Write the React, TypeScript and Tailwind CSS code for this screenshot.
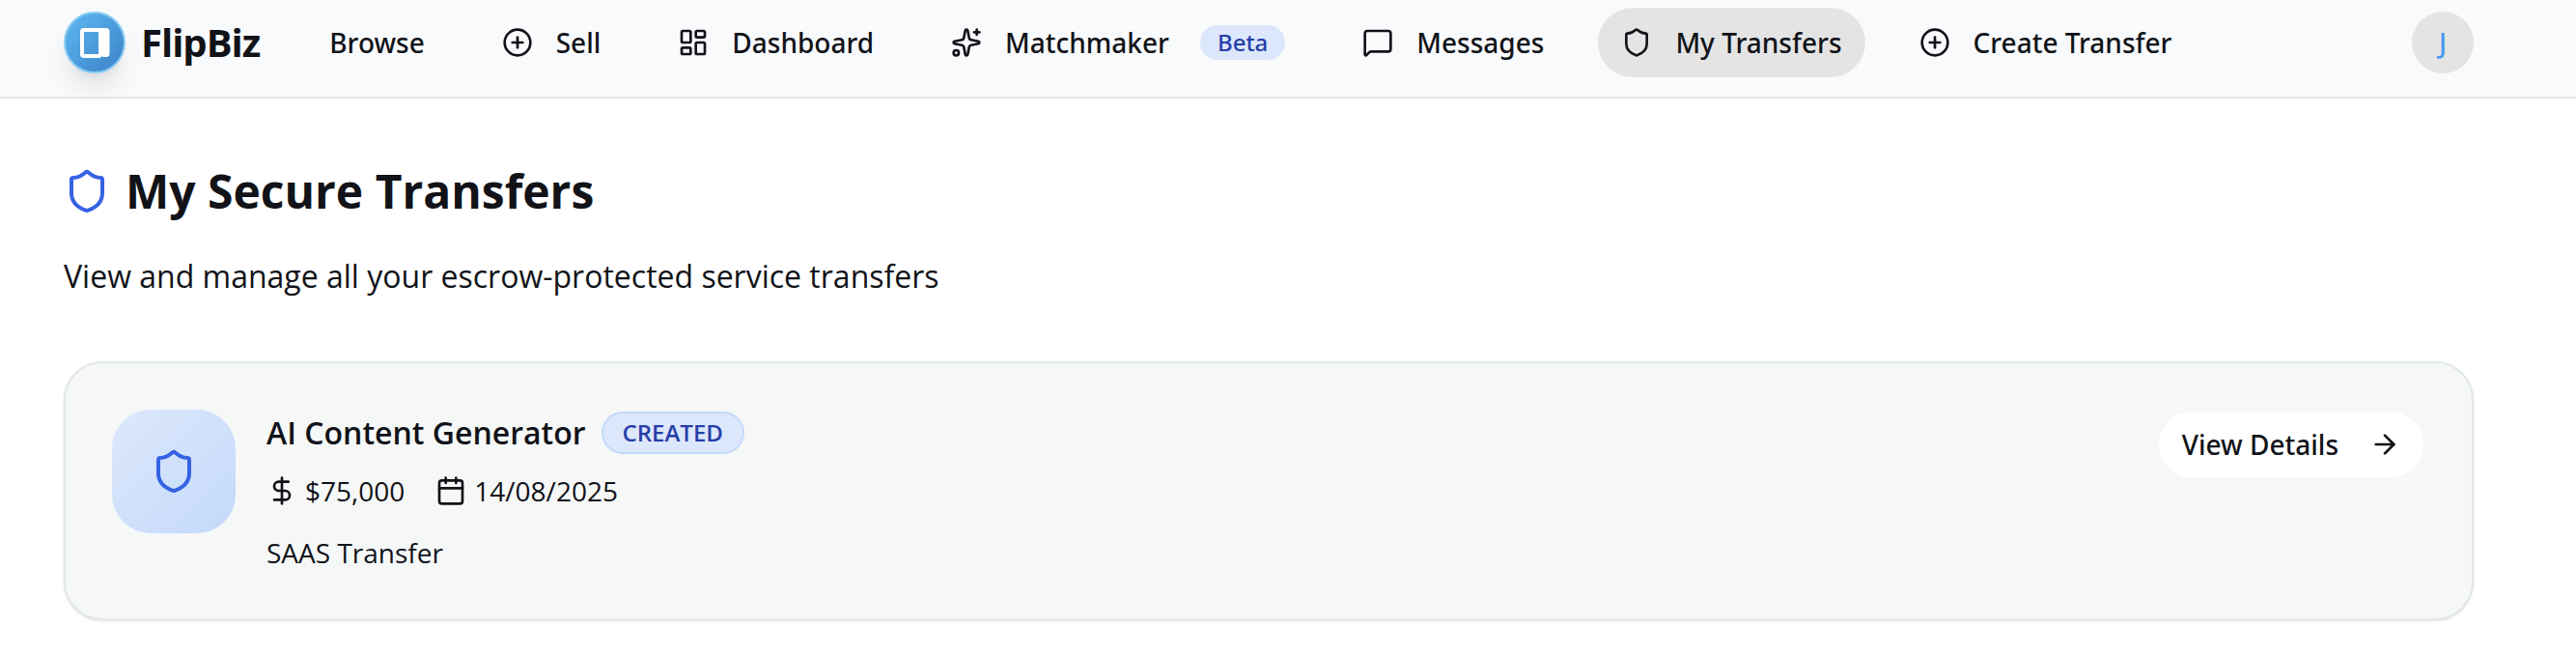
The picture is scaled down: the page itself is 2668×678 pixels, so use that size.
import {
  ArrowRight,
  Calendar,
  CirclePlus,
  DollarSign,
  LayoutDashboard,
  MessageSquare,
  Shield,
  Sparkles,
} from "lucide-react";

const navItems = [
  { href: "#browse", label: "Browse" },
  { href: "#sell", label: "Sell", icon: CirclePlus },
  { href: "#dashboard", label: "Dashboard", icon: LayoutDashboard },
  { href: "#matchmaker", label: "Matchmaker", icon: Sparkles, badge: "Beta" },
  { href: "#messages", label: "Messages", icon: MessageSquare },
  { href: "#transfers", label: "My Transfers", icon: Shield, active: true },
  { href: "#create", label: "Create Transfer", icon: CirclePlus },
];

const transfers = [
  {
    id: 1,
    title: "AI Content Generator",
    status: "CREATED",
    price: "$75,000",
    date: "14/08/2025",
    type: "SAAS Transfer",
  },
];

function Logo() {
  return (
    <span className="flex h-16 w-16 items-center justify-center rounded-full border-2 border-[#8accf5] bg-linear-to-br from-[#5fb8f0] to-[#3b82c8] shadow-[0_20px_30px_-6px_rgba(0,0,0,0.1),0_8px_12px_-8px_rgba(0,0,0,0.1)]">
      <svg viewBox="0 0 32 32" className="h-8 w-8" fill="none">
        <rect x="3" y="3" width="19" height="27" rx="2" stroke="white" strokeWidth="4" />
        <path d="M20 1h8a3.5 3.5 0 0 1 3.5 3.5v23a3.5 3.5 0 0 1-3.5 3.5h-3.5l-.8-1.500-1.200 1.500H20z" fill="white" />
      </svg>
    </span>
  );
}

function TopNav() {
  return (
    <header className="border-b-2 border-[#e2e8ec] bg-[#f9fafc] pr-10">
      <div className="mx-auto flex max-w-[2560px] items-center px-8 pt-2 pb-5">
        <a href="#home" className="flex items-center gap-4">
          <Logo />
          <span className="text-[40px] leading-[72px] font-bold tracking-tight">FlipBiz</span>
        </a>
        <nav className="ml-12 flex items-center gap-8">
          {navItems.map((item) => (
            <a
              key={item.label}
              href={item.href}
              className={`flex h-[72px] items-center gap-6 rounded-full px-6 font-['Noto_Sans',sans-serif] text-[28px] font-medium whitespace-nowrap ${
                item.active ? "bg-[#e4e4e4]" : ""
              }`}
            >
              {item.icon && <item.icon className="h-8 w-8" />}
              {item.label}
              {item.badge && (
                <span className="ml-2 rounded-full bg-[#dde7fb] px-[18px] text-2xl leading-9 text-[#263ea9]">
                  {item.badge}
                </span>
              )}
            </a>
          ))}
        </nav>
        <button
          type="button"
          aria-label="Account"
          className="ml-auto h-16 w-16 rounded-full bg-[#e4e4e4] font-['Noto_Sans',sans-serif] text-[28px] font-medium text-[#449bf0]"
        >
          J
        </button>
      </div>
    </header>
  );
}

function TransferCard({ transfer }: { transfer: (typeof transfers)[number] }) {
  return (
    <article className="flex items-start gap-8 rounded-[40px] border-2 border-[#e2e8ec] bg-[#f6f8f8] p-12 shadow-sm">
      <div className="flex h-32 w-32 items-center justify-center rounded-[40px] bg-linear-to-br from-[#dde8fb] to-[#c3d9fb] text-[#3563e3]">
        <Shield className="h-12 w-12" />
      </div>
      <div className="flex-1">
        <div className="flex items-center gap-4">
          <h2 className="text-[32px] leading-[48px] font-semibold">{transfer.title}</h2>
          <span className="rounded-full border-2 border-[#c3d9fb] bg-[#dde7fb] px-5 text-2xl leading-10 font-semibold text-[#263ea9]">
            {transfer.status}
          </span>
        </div>
        <div className="mt-4 flex gap-8 text-[28px] leading-10">
          <span className="flex items-center gap-2">
            <DollarSign className="h-8 w-8" />
            {transfer.price}
          </span>
          <span className="flex items-center gap-2">
            <Calendar className="h-8 w-8" />
            {transfer.date}
          </span>
        </div>
        <p className="mt-6 text-[28px] leading-10">{transfer.type}</p>
      </div>
      <button
        type="button"
        className="flex h-[72px] items-center gap-8 rounded-full border-2 border-transparent bg-white bg-clip-padding px-6 font-['Noto_Sans',sans-serif] text-[28px] font-medium"
      >
        View Details
        <ArrowRight className="h-8 w-8" />
      </button>
    </article>
  );
}

export default function App() {
  return (
    <div className="min-h-screen bg-white font-['Open_Sans','Noto_Sans',sans-serif] text-[#111318]">
      <TopNav />
      <main className="pr-10">
        <div className="mx-auto max-w-[2560px] px-8 pt-16">
          <h1 className="flex items-center gap-4 text-5xl leading-[64px] font-bold">
            <Shield className="h-12 w-12 text-[#3563e3]" />
            My Secure Transfers
          </h1>
          <p className="mt-8 text-[32px] leading-[48px]">
            View and manage all your escrow-protected service transfers
          </p>
          <div className="mt-16 flex flex-col gap-8">
            {transfers.map((transfer) => (
              <TransferCard key={transfer.id} transfer={transfer} />
            ))}
          </div>
        </div>
      </main>
    </div>
  );
}
